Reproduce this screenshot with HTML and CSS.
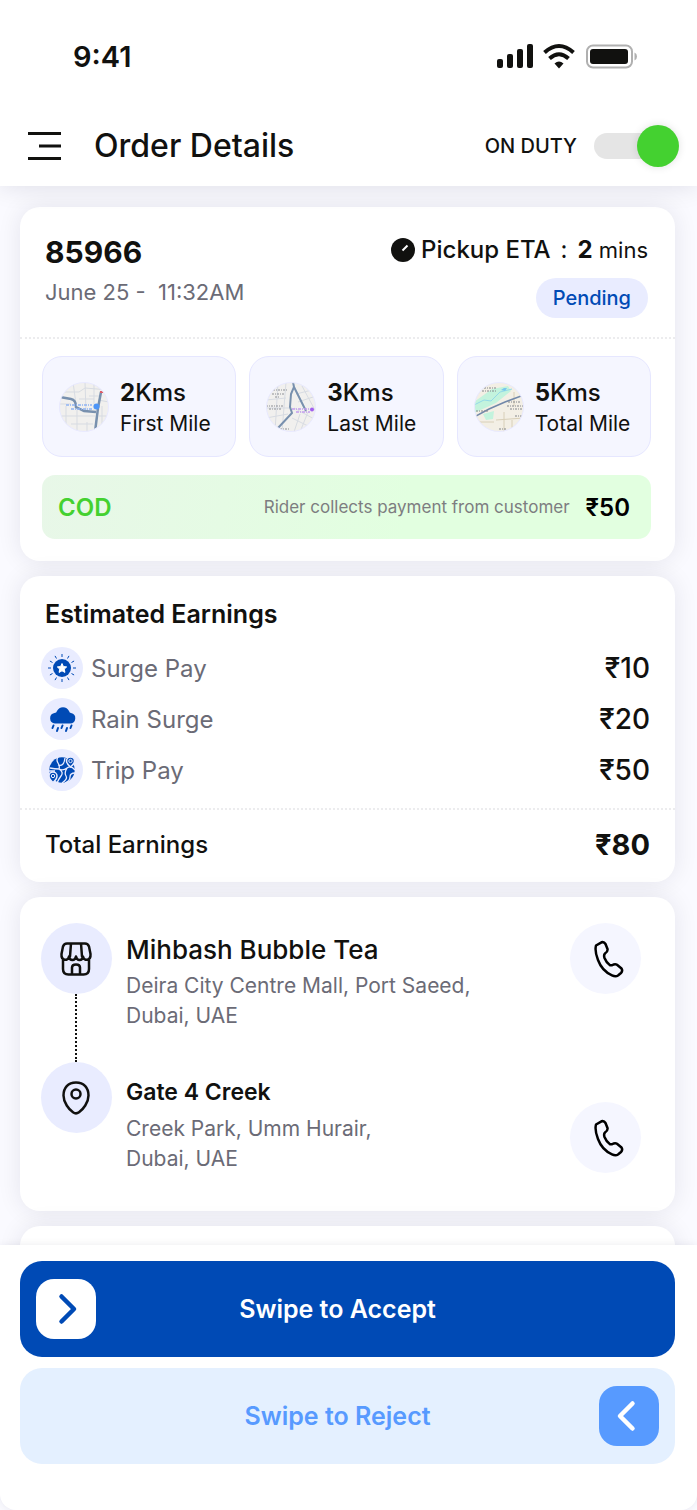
FILE: index.html
```html
<!DOCTYPE html>
<html lang="en">
<head>
<meta charset="utf-8">
<meta name="viewport" content="width=device-width, initial-scale=1">
<title>Order Details</title>
<link rel="stylesheet" href="styles.css">
</head>
<body>
<div class="app">
  <header class="top">
    <div class="status">
      <span class="clock">9:41</span>
      <svg class="status-icons" width="142" height="28" viewBox="0 0 142 28" aria-hidden="true">
        <g fill="#11110f">
          <rect x="1" y="16" width="6" height="9" rx="2"/>
          <rect x="11" y="11" width="6" height="14" rx="2"/>
          <rect x="21" y="6" width="6" height="19" rx="2"/>
          <rect x="31" y="1" width="6" height="24" rx="2"/>
          <path d="M63 25.500L58.500 20.500Q63 16.500 67.500 20.500Z"/>
          <rect x="94" y="6" width="38" height="15" rx="3"/>
        </g>
        <g fill="none" stroke="#11110f" stroke-width="4">
          <path d="M48.500 9.500Q63 -3.500 77.500 9.500"/>
          <path d="M53.500 15.500Q63 7 72.500 15.500"/>
        </g>
        <rect x="91" y="2.500" width="45" height="22" rx="6" fill="none" stroke="#b0b0b0" stroke-width="2"/>
        <path d="M138.500 9.500Q141 10.500 141 13.500T138.500 17.500Z" fill="#b0b0b0"/>
      </svg>
    </div>
    <div class="bar">
      <button class="menu" type="button" aria-label="Menu">
        <svg width="33" height="30" viewBox="0 0 33 30"><path d="M0 2.500H33M11 15H33M0 27.500H33" stroke="#11110f" stroke-width="3"/></svg>
      </button>
      <h1 class="title">Order Details</h1>
      <label class="duty-label" for="duty">ON DUTY</label>
      <input class="switch" id="duty" type="checkbox" role="switch" checked>
    </div>
  </header>

  <main class="content">
    <section class="card order">
      <div class="order-head">
        <div>
          <h2 class="order-id">85966</h2>
          <p class="order-date">June 25 -&nbsp; 11:32AM</p>
        </div>
        <div class="order-side">
          <p class="eta">
            <svg width="24" height="24" viewBox="0 0 24 24" aria-hidden="true"><circle cx="12" cy="12" r="12" fill="#11110f"/><path d="M11.500 12.500L16.500 7.500" stroke="#fff" stroke-width="2"/></svg>
            <span class="eta-name">Pickup ETA</span><span class="eta-colon">:</span><span class="eta-time"><b>2</b> mins</span>
          </p>
          <span class="badge">Pending</span>
        </div>
      </div>
      <div class="order-body">
        <ul class="tiles">
          <li class="tile">
            <svg class="map" viewBox="0 0 50 50" aria-hidden="true">
              <defs><clipPath id="disc"><circle cx="25" cy="25" r="24.500"/></clipPath></defs>
              <g clip-path="url(#disc)" fill="none">
                <path fill="#f1f0ee" d="M0 0H50V50H0Z"/>
                <path stroke="#d7dbe2" stroke-width="1" d="M0 10H20L26 6L50 8M14 0L17 22M7 24V50M0 34H36M18 26V50M26 0L27 30M35 0V28M12 42H34M39 18L50 20M40 34H50M28 40V50M0 22H12M43 24V50M30 14H42M20 17H35"/>
                <path stroke="#7890ae" stroke-width="2.500" d="M1 15L12 17Q17 18 17 25L25 29L37 30M42 10L39 26L36 50"/>
                <path stroke="#8fb3f2" stroke-width="1.500" stroke-dasharray="3 1 1 1" d="M7 23H33M12 27H33"/>
                <circle cx="37.500" cy="24.500" r="3" fill="#4d95f7"/>
                <path stroke="#df5d68" stroke-width="2" d="M41 10H45"/>
              </g>
              <circle cx="25" cy="25" r="24.500" fill="none" stroke="#e8e9ff"/>
            </svg>
            <div class="tile-text"><p class="distance"><b>2</b>Kms</p><p class="leg">First Mile</p></div>
          </li>
          <li class="tile">
            <svg class="map" viewBox="0 0 50 50" aria-hidden="true">
              <g clip-path="url(#disc)" fill="none">
                <path fill="#f1f0ee" d="M0 0H50V50H0Z"/>
                <path stroke="#d7dbe2" stroke-width="1" d="M0 18L20 16M0 36L22 32M12 0L9 50M20 0L16 50M30 12L46 8M32 20L50 14M28 26L50 38M26 36L46 46M34 32L28 50M42 30L34 50M36 4L50 30M0 26H24"/>
                <path stroke="#7890ae" stroke-width="2" d="M27 0L28 5L25 12L24 25L26 31L12 46M28 5L40 29"/>
                <path stroke="#8d9096" stroke-width="1" stroke-dasharray="2 1 1 1" d="M7 8H22M6 12H19M9 15H14M0 24H18M3 27H15M14 47H23"/>
                <path stroke="#c29cee" stroke-width="1.500" stroke-dasharray="3 1 1 1" d="M26 27H44M30 30H44"/>
                <circle cx="46" cy="27.500" r="2" fill="#a25fee"/>
              </g>
              <circle cx="25" cy="25" r="24.500" fill="none" stroke="#e8e9ff"/>
            </svg>
            <div class="tile-text"><p class="distance"><b>3</b>Kms</p><p class="leg">Last Mile</p></div>
          </li>
          <li class="tile">
            <svg class="map" viewBox="0 0 50 50" aria-hidden="true">
              <g clip-path="url(#disc)" fill="none">
                <path fill="#f3efe5" d="M0 0H50V50H0Z"/>
                <path fill="#c3f3dd" d="M0 20L18 7L34 4L37 9L22 21L0 31ZM9 32L20 29L19 37L12 38Z"/>
                <path stroke="#d8cfb8" stroke-width="1" d="M22 38L50 36M30 30V50M40 10V24M4 40H20M38 38V50"/>
                <path stroke="#93d9e8" stroke-width="1" d="M0 23L10 18L17 19L26 10L38 7"/>
                <path stroke="#7288a9" stroke-width="1.500" d="M0 35L15 27L31 20L50 13"/>
                <path fill="#78c9ee" d="M27 8L30 6H33L31 9Z"/>
                <path stroke="#84878c" stroke-width="1" stroke-dasharray="2 1 1 1" d="M10 6H22M8 9H23M2 29H14M34 20H46M33 24H50M36 27H48M41 34H48M25 47H33"/>
              </g>
              <circle cx="25" cy="25" r="24.500" fill="none" stroke="#e8e9ff"/>
            </svg>
            <div class="tile-text"><p class="distance"><b>5</b>Kms</p><p class="leg">Total Mile</p></div>
          </li>
        </ul>
        <div class="cod">
          <span class="cod-tag">COD</span>
          <span class="cod-note">Rider collects payment from customer</span>
          <strong class="cod-sum">₹50</strong>
        </div>
      </div>
    </section>

    <section class="card earnings">
      <h2 class="earnings-title">Estimated Earnings</h2>
      <dl class="pay-list">
        <div class="pay">
          <dt class="pay-name">
            <svg class="pay-icon" viewBox="0 0 42 42" aria-hidden="true"><circle cx="21" cy="21" r="21" fill="#e9ecff"/><circle cx="21" cy="21" r="9" fill="#004ab5"/><path d="M21 16.500L22.400 19.500L25.700 19.900L23.300 22.100L23.900 25.400L21 23.800L18.100 25.400L18.700 22.100L16.300 19.900L19.600 19.500Z" fill="#fff" stroke="#fff" stroke-width="1" stroke-linejoin="round"/><path stroke="#004ab5" stroke-width="1" d="M21 7V10M21 32V35M7 21H10M32 21H35M14 8.900L15.500 11.500M26.500 30.500L28 33.100M28 8.900L26.500 11.500M15.500 30.500L14 33.100M8.900 14L11.500 15.500M30.500 26.500L33.100 28M8.900 28L11.500 26.500M30.500 15.500L33.100 14"/></svg>
            Surge Pay
          </dt>
          <dd class="pay-sum">₹10</dd>
        </div>
        <div class="pay">
          <dt class="pay-name">
            <svg class="pay-icon" viewBox="0 0 42 42" aria-hidden="true"><circle cx="21" cy="21" r="21" fill="#e9ecff"/><path d="M14 25.500A5.300 5.300 0 0 1 13.500 15Q15.500 14.800 16 13A6.600 6.600 0 0 1 28 13Q28.500 14.800 30 15A5.300 5.300 0 0 1 29 25.500Z" fill="#004ab5"/><path d="M12.500 27.500L11.500 30M17 30L16 33M21.500 27.500L20.500 30M26 30L25 33M30.500 27.500L29.500 30" stroke="#004ab5" stroke-width="2" stroke-linecap="round"/></svg>
            Rain Surge
          </dt>
          <dd class="pay-sum">₹20</dd>
        </div>
        <div class="pay">
          <dt class="pay-name">
            <svg class="pay-icon" viewBox="0 0 42 42" aria-hidden="true"><circle cx="21" cy="21" r="21" fill="#e9ecff"/><circle cx="21" cy="21" r="12.700" fill="#004ab5"/><g fill="none" stroke="#e9ecff" stroke-width="1.300"><path d="M17 8Q15 11 17 14T18 20Q14 20 9 19M18 20Q22 22 26 19T34 21M18 20Q23 23 20 27T16 34M26 19Q23 24 25 27T21 34M34 24Q29 24 29 28T24 34M17 16Q23 18 24 9M8 22L14 22"/></g><path d="M29.500 18Q25.500 14.500 25.500 12A4 4 0 0 1 33.500 12Q33.500 14.500 29.500 18ZM12 33.500Q8 30 8 27A4 4 0 0 1 16 27Q16 30 12 33.500Z" fill="#004ab5" stroke="#e9ecff" stroke-width="1.500"/><g fill="none" stroke="#e9ecff"><circle cx="29.500" cy="12" r="1.700"/><circle cx="12" cy="27" r="1.700"/></g></svg>
            Trip Pay
          </dt>
          <dd class="pay-sum">₹50</dd>
        </div>
      </dl>
      <div class="total">
        <span class="total-name">Total Earnings</span>
        <strong class="total-sum">₹80</strong>
      </div>
    </section>

    <section class="card route">
      <article class="stop">
        <div class="rail">
          <span class="spot">
            <svg width="34" height="36" viewBox="0 0 34 36" fill="none" stroke="#11110f" stroke-width="2.500" stroke-linejoin="round" stroke-linecap="round" aria-hidden="true"><path d="M8 2.500H26Q29 2.500 30 5.500L31.500 13C32 20 25 20.500 24 15.500C23 20.500 18 20 17 15.500C16 20 11 20.500 10 15.500C9 20.500 2 20 2.500 13L4 5.500Q5 2.500 8 2.500ZM12 2.500L11 15.500M22 2.500L23 15.500M4 19V28Q4 33.500 9.500 33.500H24.500Q30 33.500 30 28V19M13 33V26.500Q13 23.500 17 23.500T21 26.500V33"/></svg>
          </span>
          <span class="thread"></span>
        </div>
        <div class="place">
          <h3 class="place-name place-name-lg">Mihbash Bubble Tea</h3>
          <p class="address">Deira City Centre Mall, Port Saeed,<br>Dubai, UAE</p>
        </div>
        <button class="call" type="button" aria-label="Call Mihbash Bubble Tea">
          <svg width="38" height="38" viewBox="-6 0 38 38" fill="none" stroke="#000" stroke-width="2.500" stroke-linejoin="round" aria-hidden="true"><path d="M3 5.500L8.500 2.300Q11 1.500 12.500 4L14.500 9Q15 11.500 12 13.500Q10.500 15 11.500 18Q13.500 23 17 25.300H19Q22 23.500 24 24.800L28.500 28.500Q30 31 28 33L25 35.500Q22.500 37 19 35.300Q9 31 5 20Q1.500 11 3 5.500Z"/></svg>
        </button>
      </article>
      <article class="stop stop-last">
        <div class="rail">
          <span class="spot">
            <svg width="34" height="36" viewBox="0 0 34 36" fill="none" stroke="#11110f" stroke-width="2.500" aria-hidden="true"><path d="M17 2.500C9 2.500 4.500 8 4.500 15.500C4.500 22.500 10 29.500 14 32.300Q17 34.500 20 32.300C24 29.500 29.500 22.500 29.500 15.500C29.500 8 25 2.500 17 2.500Z"/><circle cx="17" cy="14" r="4.500"/></svg>
          </span>
        </div>
        <div class="place">
          <h3 class="place-name">Gate 4 Creek</h3>
          <p class="address">Creek Park, Umm Hurair,<br>Dubai, UAE</p>
        </div>
        <button class="call" type="button" aria-label="Call Gate 4 Creek">
          <svg width="38" height="38" viewBox="-6 0 38 38" fill="none" stroke="#000" stroke-width="2.500" stroke-linejoin="round" aria-hidden="true"><path d="M3 5.500L8.500 2.300Q11 1.500 12.500 4L14.500 9Q15 11.500 12 13.500Q10.500 15 11.500 18Q13.500 23 17 25.300H19Q22 23.500 24 24.800L28.500 28.500Q30 31 28 33L25 35.500Q22.500 37 19 35.300Q9 31 5 20Q1.500 11 3 5.500Z"/></svg>
        </button>
      </article>
    </section>

    <section class="card next"></section>
  </main>

  <footer class="actions">
    <button class="swipe accept" type="button">
      <span class="thumb"><svg width="24" height="32" viewBox="-4 0 24 32" aria-hidden="true"><path d="M3.500 3.500L16 16L3.500 28.500" fill="none" stroke="currentColor" stroke-width="4.500" stroke-linecap="round" stroke-linejoin="round"/></svg></span>
      <span class="swipe-text">Swipe to Accept</span>
    </button>
    <button class="swipe reject" type="button">
      <span class="swipe-text">Swipe to Reject</span>
      <span class="thumb"><svg width="26" height="32" viewBox="0 0 26 32" aria-hidden="true"><path d="M16.500 3.500L4 16L16.500 28.500" fill="none" stroke="currentColor" stroke-width="4.500" stroke-linecap="round" stroke-linejoin="round"/></svg></span>
    </button>
  </footer>
</div>
</body>
</html>
```
FILE: styles.css
```css
* { box-sizing: border-box; margin: 0; padding: 0; }

body {
  background: #fafaff;
  color: #11110f;
  font-family: Inter, "Liberation Sans", sans-serif;
}

button { border: 0; background: none; font: inherit; color: inherit; cursor: pointer; }
svg { display: block; flex: none; }

.app { height: 100vh; display: flex; flex-direction: column; }

/* header */
.top {
  position: relative;
  z-index: 1;
  background: #fff;
  box-shadow: 0 0 24px rgba(20, 20, 50, 0.12);
}
.status {
  display: flex;
  align-items: center;
  justify-content: space-between;
  padding: 40px 59px 0 73px;
  height: 74px;
}
.clock { font-size: 29px; font-weight: 600; line-height: 34px; }
.bar {
  display: flex;
  align-items: center;
  height: 112px;
  padding: 31px 18px 0 28px;
}
.menu { margin-right: 33px; }
.title { flex: 1; font-size: 32px; font-weight: 500; line-height: 40px; }
.duty-label { font-size: 20px; font-weight: 500; margin-right: 17px; }
.switch {
  appearance: none;
  position: relative;
  width: 72px;
  height: 26px;
  margin-right: 13px;
  border-radius: 13px;
  background: #e5e5e5;
  cursor: pointer;
}
.switch::after {
  content: "";
  position: absolute;
  top: -8px;
  right: -13px;
  width: 42px;
  height: 42px;
  border-radius: 50%;
  background: #a5a5a5;
  box-shadow: 0 0 8px rgba(0, 0, 0, 0.12);
}
.switch:not(:checked)::after { right: 43px; }
.switch:checked::after { background: #44d130; }

/* cards */
.content {
  flex: 1;
  min-height: 0;
  overflow-y: auto;
  scrollbar-width: none;
  display: flex;
  flex-direction: column;
  gap: 15px;
  padding: 21px 22px 0 20px;
}
.card {
  flex: none;
  background: #fff;
  border-radius: 20px;
  box-shadow: 0 0 24px rgba(20, 20, 50, 0.09);
}

.order-head {
  display: flex;
  justify-content: space-between;
  height: 132px;
  padding: 27px 27px 0 25px;
  border-bottom: 2px dotted #ececee;
}
.order-id { font-size: 30px; font-weight: 700; line-height: 36px; }
.order-date { margin-top: 7px; font-size: 22px; line-height: 30px; color: #6b6b76; }
.order-side { display: flex; flex-direction: column; align-items: flex-end; gap: 12px; }
.eta { display: flex; align-items: center; font-size: 24px; line-height: 32px; }
.eta-name { margin-left: 6px; font-weight: 500; }
.eta-colon { margin: 0 10px; }
.eta-time { font-size: 22px; }
.eta-time b { font-size: 24px; }
.badge {
  padding: 0 17px;
  border-radius: 20px;
  background: #e9ecff;
  color: #004ab5;
  font-size: 20px;
  font-weight: 500;
  line-height: 40px;
}

.order-body { padding: 17px 24px 22px 22px; }
.tiles { display: grid; grid-template-columns: repeat(3, 1fr); gap: 13px; list-style: none; }
.tile {
  display: flex;
  align-items: center;
  gap: 11px;
  height: 101px;
  padding-left: 16px;
  border: 1px solid #e6e7ff;
  border-radius: 20px;
  background: #f5f6ff;
}
.map { width: 50px; height: 50px; }
.tile-text { padding-top: 3px; }
.distance { font-size: 24px; font-weight: 500; line-height: 32px; }
.leg { font-size: 21px; line-height: 30px; }
.cod {
  display: flex;
  align-items: center;
  height: 64px;
  margin-top: 18px;
  padding: 0 21px 0 16px;
  border-radius: 13px;
  background: linear-gradient(100deg, #e8f7e8, #e2ffe0 60%);
}
.cod-tag { flex: 1; color: #44d130; font-size: 24px; font-weight: 600; }
.cod-note { font-size: 17px; color: #7d7d80; }
.cod-sum { margin-left: 16px; color: #000; font-size: 24px; font-weight: 600; }

.earnings-title { padding: 22px 25px 0; font-size: 25px; font-weight: 600; line-height: 32px; }
.pay-list { display: grid; gap: 9px; padding: 17px 25px 17px 21px; }
.pay { display: flex; justify-content: space-between; align-items: center; }
.pay-name { display: flex; align-items: center; gap: 8px; font-size: 24px; color: #6b6b76; }
.pay-icon { width: 42px; height: 42px; }
.pay-sum { font-size: 28px; font-weight: 500; line-height: 38px; }
.total {
  display: flex;
  justify-content: space-between;
  align-items: center;
  height: 74px;
  padding: 0 25px 3px;
  border-top: 2px dotted #ececee;
}
.total-name { font-size: 24px; font-weight: 500; }
.total-sum { font-size: 29px; font-weight: 700; }

/* route */
.route { padding: 26px 34px 37px 21px; }
.stop {
  display: grid;
  grid-template-columns: 70px 1fr 71px;
  align-items: start;
  column-gap: 15px;
  min-height: 139px;
}
.stop-last { min-height: 0; }
.rail { display: flex; flex-direction: column; align-items: center; align-self: stretch; }
.spot {
  display: grid;
  place-items: center;
  width: 71px;
  height: 71px;
  border-radius: 50%;
  background: #e9ecff;
}
.thread { flex: 1; border-left: 2px dotted #11110f; }
.place { padding-top: 10px; white-space: nowrap; }
.stop-last .place { padding-top: 12px; }
.place-name { font-size: 23px; font-weight: 600; line-height: 36px; }
.place-name-lg { font-size: 26px; font-weight: 500; line-height: 34px; }
.address { margin-top: 4px; font-size: 21px; line-height: 30px; color: #6b6b76; }
.call {
  display: grid;
  place-items: center;
  width: 71px;
  height: 71px;
  border-radius: 50%;
  background: #f5f6ff;
}
.stop-last .call { margin-top: 40px; }
.next { height: 96px; }

/* actions */
.actions {
  position: relative;
  z-index: 1;
  display: grid;
  gap: 11px;
  padding: 16px 22px 46px 20px;
  border-radius: 0 0 16px 16px;
  background: #fff;
  box-shadow: 0 0 8px rgba(20, 20, 50, 0.08);
}
.swipe {
  display: grid;
  grid-template-columns: 60px 1fr 80px;
  align-items: center;
  height: 96px;
  padding: 0 16px;
  border-radius: 22px;
  font-size: 25px;
  font-weight: 600;
}
.accept { background: #004ab5; color: #fff; }
.reject { background: #e4f0ff; color: #579aff; }
.swipe-text { grid-column: 2; }
.thumb { display: grid; place-items: center; width: 60px; height: 60px; border-radius: 18px; }
.accept .thumb { background: #fff; color: #004ab5; }
.reject .thumb { justify-self: end; background: #579aff; color: #fff; }
```
